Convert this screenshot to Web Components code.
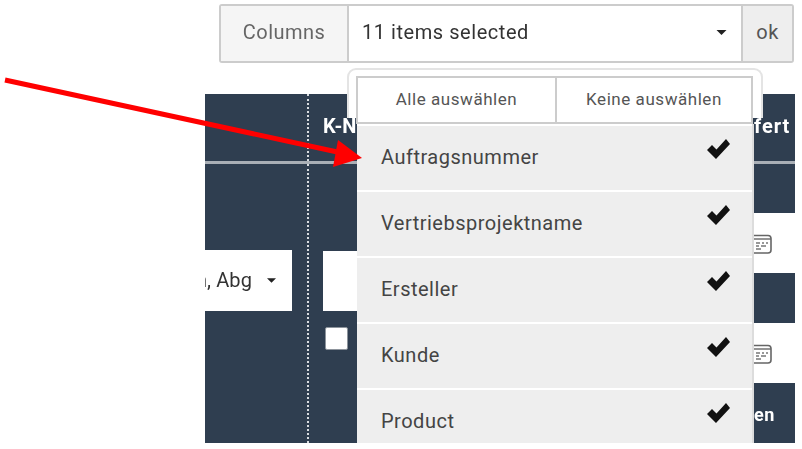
<!DOCTYPE html>
<html lang="de">
<head>
<meta charset="utf-8">
<title>Columns</title>
<style>
  html, body { margin: 0; height: 100%; background: #fff; overflow: hidden; }
  body { font-family: Roboto, "Liberation Sans", sans-serif; }
</style>
</head>
<body>
<app-shell>
  <column-toolbar label="Columns" value="11 items selected" action="ok"></column-toolbar>
  <status-grid></status-grid>
  <column-menu slot="overlay">
    <column-option>Auftragsnummer</column-option>
    <column-option>Vertriebsprojektname</column-option>
    <column-option>Ersteller</column-option>
    <column-option>Kunde</column-option>
    <column-option>Product</column-option>
  </column-menu>
</app-shell>
<script>
const caret = (w, h) => `<svg width="${w}" height="${h}" viewBox="0 0 10 5" aria-hidden="true"><path d="M0 0h10L5 5z" fill="#222"/></svg>`;

class AppShell extends HTMLElement {
  constructor() {
    super();
    this.attachShadow({ mode: 'open' }).innerHTML = `
      <style>
        :host { display: block; position: relative; width: 802px; height: 449px; overflow: hidden; }
        .clip { height: 443px; overflow: hidden; position: relative; filter: blur(.55px); padding-top: 4px; box-sizing: border-box; }
        .arrow { position: absolute; left: 0; top: 0; filter: blur(.3px); }
      </style>
      <div class="clip"><slot></slot><slot name="overlay"></slot></div>
      <svg class="arrow" width="802" height="449" aria-hidden="true">
        <path d="M5 80L342 153" stroke="#f00" stroke-width="5" fill="none"/>
        <path d="M362 158L338 140L333 167z" fill="#f00"/>
      </svg>`;
  }
}

class ColumnToolbar extends HTMLElement {
  constructor() {
    super();
    this.attachShadow({ mode: 'open' }).innerHTML = `
      <style>
        :host { display: grid; grid-template-columns: 128px 1fr 51px; height: 59px; margin: 0 8px 0 219px;
          box-sizing: border-box; border: 2px solid #ccc; border-radius: 3px; font-size: 20px; }
        div { display: flex; align-items: center; min-width: 0; }
        .label { background: #f5f5f5; color: #666; border-right: 2px solid #ccc; justify-content: center; letter-spacing: .45px; padding-bottom: 3px; }
        .value { color: #333; padding: 0 14px 3px 13px; justify-content: space-between; letter-spacing: .55px; }
        .action { background: #eee; color: #555; border-left: 2px solid #ccc; justify-content: center; padding-bottom: 3px; letter-spacing: .6px; }
      </style>
      <div class="label"></div>
      <div class="value"><span></span>${caret(11, 5)}</div>
      <div class="action"></div>`;
  }
  connectedCallback() {
    const root = this.shadowRoot;
    root.querySelector('.label').textContent = this.getAttribute('label');
    root.querySelector('.value span').textContent = this.getAttribute('value');
    root.querySelector('.action').textContent = this.getAttribute('action');
  }
}

class StatusGrid extends HTMLElement {
  constructor() {
    super();
    const calendar = `<svg width="19" height="21" viewBox="0 0 19 21" aria-hidden="true">
      <path d="M1 2.500h14a3 3 0 0 1 3 3V17a3 3 0 0 1-3 3H1" fill="none" stroke="#666" stroke-width="1.600"/>
      <path d="M0 6h18" stroke="#666" stroke-width="1.400"/>
      <path d="M3 10h4M9 10h2M13 10h2M3 13h3M8 13h5M3 16h5" stroke="#777" stroke-width="1.400"/></svg>`;
    this.attachShadow({ mode: 'open' }).innerHTML = `
      <style>
        :host { display: block; width: 590px; margin: 31px 0 0 205px; height: 349px; background: #2f3e50; color: #fff; }
        .head { display: grid; grid-template-columns: 104px 1fr 41px; height: 67px; border-bottom: 3px solid #a9afb6; font: 700 20px Roboto, sans-serif; }
        .body { display: grid; grid-template-columns: 104px 1fr 41px; height: 279px; }
        .sep { border-right: 2px dotted #d8dce0; }
        .head > div { display: flex; align-items: center; padding-bottom: 4px; box-sizing: border-box; overflow: hidden; white-space: nowrap; }
        .kn { padding-left: 14px; }
        .col { display: flex; flex-direction: column; min-width: 0; }
        .picker { margin-top: 86px; height: 61px; width: 87px; background: #fff; display: flex; align-items: center; gap: 15px; padding-right: 16px; box-sizing: border-box; color: #333; font: 400 20px Roboto, sans-serif; }
        .picker .txt { flex: 1; overflow: hidden; display: flex; justify-content: flex-end; white-space: nowrap; letter-spacing: .1px; margin-top: -2px; }
        .field { margin: 87px 0 0 14px; height: 60px; background: #fff; }
        .tick { margin: 16px 0 0 16px; width: 23px; height: 23px; background: #fff; border: 1px solid #8d949c; box-sizing: border-box; border-radius: 2px; }
        .dark48 { height: 49px; }
        .dark50 { height: 50px; }
        .date { height: 60px; background: #fff; display: flex; align-items: center; color: #555; margin-left: -1px; }
        .rest { flex: 1; display: flex; align-items: center; font: 700 18px Roboto, sans-serif; padding: 3px 0 0 0; letter-spacing: .5px; }
      </style>
      <div class="head">
        <div class="sep"></div>
        <div class="kn">K-N</div>
        <div style="letter-spacing:1px">fert</div>
      </div>
      <div class="body">
        <div class="col sep">
          <div class="picker"><span class="txt"><span>n, Abg</span></span>${caret(9, 5)}</div>
        </div>
        <div class="col">
          <div class="field"></div>
          <div class="tick"></div>
        </div>
        <div class="col">
          <div class="dark48"></div>
          <div class="date">${calendar}</div>
          <div class="dark50"></div>
          <div class="date">${calendar}</div>
          <div class="rest">en</div>
        </div>
      </div>`;
  }
}

class ColumnMenu extends HTMLElement {
  constructor() {
    super();
    this.attachShadow({ mode: 'open' }).innerHTML = `
      <style>
        :host { display: block; position: absolute; left: 347px; top: 68px; width: 416px; }
        .cap { position: absolute; inset: 0 0 auto 0; height: 50px; box-sizing: border-box; background: #fff;
          border: 2px solid #e4e4e4; border-bottom: 0; border-radius: 9px 9px 0 0; }
        .wrap { position: relative; margin: 0 9px 0 9px; padding-top: 8px; display: flex; flex-direction: column; }
        .btns { display: grid; grid-template-columns: 197px 1fr; height: 48px; width: 397px; box-sizing: border-box; border: 2px solid #ccc; background: #fff; font-size: 17px; color: #555; letter-spacing: .55px; }
        .btns div { display: flex; align-items: center; justify-content: center; padding-bottom: 3px; }
        .btns div + div { border-left: 2px solid #ccc; }
        .list { margin: 0 0 0 1px; padding-top: 2px; width: 397px; box-sizing: border-box; background: #fff; border-right: 2px solid #dcdcdc; }
        .list ::slotted(column-option) { margin-bottom: 2px; }
      </style>
      <div class="cap"></div>
      <div class="wrap">
        <div class="btns"><div>Alle auswählen</div><div>Keine auswählen</div></div>
        <div class="list"><slot></slot></div>
      </div>`;
  }
}

class ColumnOption extends HTMLElement {
  constructor() {
    super();
    this.attachShadow({ mode: 'open' }).innerHTML = `
      <style>
        :host { display: flex; align-items: center; justify-content: space-between; height: 64px; box-sizing: border-box;
          padding: 0 22px 3px 24px; background: #eee; color: #444; font-size: 20px; letter-spacing: .5px; }
        svg { margin-top: -15px; }
      </style>
      <span><slot></slot></span>
      <svg width="23" height="20" viewBox="0 0 23 20" aria-hidden="true"><path d="M0 11l5-5 4.500 4.500L19 0l4 5L9 20z" fill="#111"/></svg>`;
  }
}

customElements.define('app-shell', AppShell);
customElements.define('column-toolbar', ColumnToolbar);
customElements.define('status-grid', StatusGrid);
customElements.define('column-menu', ColumnMenu);
customElements.define('column-option', ColumnOption);
</script>
</body>
</html>
